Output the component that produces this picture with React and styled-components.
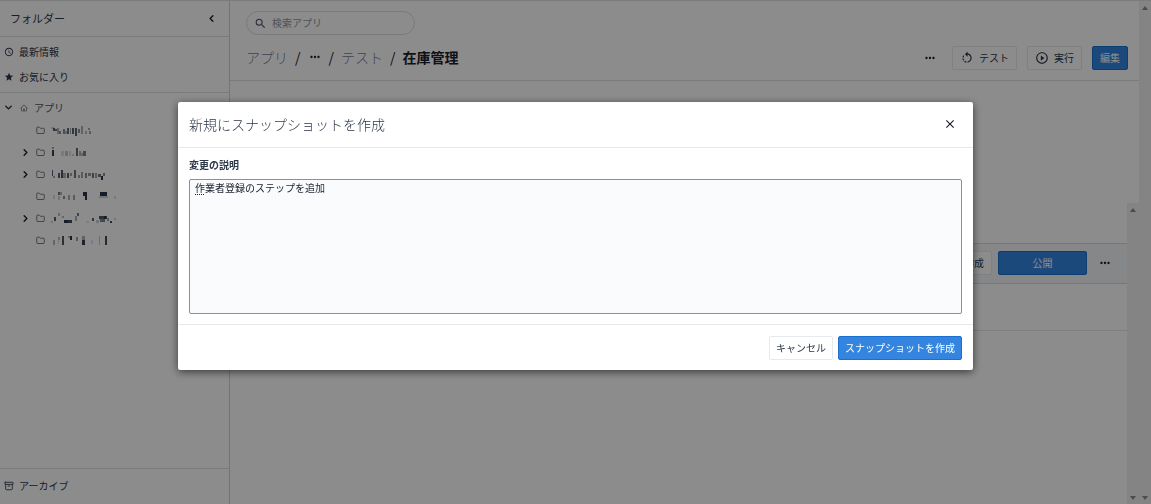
import { useState } from 'react';
import styled, { createGlobalStyle } from 'styled-components';
import {
  Archive,
  ChevronDown,
  ChevronLeft,
  ChevronRight,
  Folder,
} from 'lucide-react';
import { AiOutlineHome } from 'react-icons/ai';
import {
  MdAccessTime,
  MdClose,
  MdMoreHoriz,
  MdPlayCircleOutline,
  MdRotateLeft,
  MdSearch,
  MdStar,
} from 'react-icons/md';

const GlobalStyle = createGlobalStyle`
  * {
    box-sizing: border-box;
  }

  body {
    margin: 0;
    background-color: #ffffff;
    color: #2d3748;
    font-family: 'Noto Sans CJK JP', sans-serif;
    font-size: 10px;
    line-height: 16px;
  }

  button, input, textarea {
    font: inherit;
    color: inherit;
  }

  svg {
    display: block;
    flex-shrink: 0;
  }
`;

const Page = styled.div`
  display: flex;
  height: 100vh;
  overflow: hidden;
  border-top: 1px solid #dfe1e4;
`;

const Sidebar = styled.aside`
  display: flex;
  flex-direction: column;
  flex: 0 0 230px;
  border-right: 1px solid #cfd3d8;
`;

const SidebarHeader = styled.header`
  display: flex;
  align-items: center;
  justify-content: space-between;
  height: 36px;
  padding: 0 12px 1px 10px;
  border-bottom: 1px solid #dfe1e4;
`;

const SidebarTitle = styled.h2`
  margin: 0;
  font-size: 11px;
  font-weight: 400;
`;

const IconButton = styled.button`
  display: flex;
  align-items: center;
  justify-content: center;
  min-width: ${({ $roomy }) => ($roomy ? '24px' : '0')};
  padding: 0;
  border: none;
  background: none;
  color: #1a202c;
  cursor: pointer;
`;

const SideLinks = styled.nav`
  padding: 2px 0 3px;
  border-bottom: 1px solid #dfe1e4;
`;

const SideLink = styled.a`
  display: flex;
  align-items: center;
  gap: 5px;
  height: 25px;
  padding-left: 4px;
  color: #2d3748;
  text-decoration: none;
`;

const Tree = styled.ul`
  flex: 1;
  margin: 0;
  padding: 3px 0 0;
  list-style: none;
`;

const TreeRoot = styled.li`
  display: flex;
  align-items: center;
  gap: 6px;
  height: 23px;
  padding-left: 3px;
  color: #4a5568;
`;

const TreeRow = styled.li`
  display: flex;
  align-items: center;
  gap: 5px;
  height: 22px;
  padding-left: ${({ $open }) => ($open ? '20px' : '36px')};
  color: #4a5568;
`;

const SidebarFooter = styled.footer`
  padding: 4px 0 6px;
  border-top: 1px solid #dfe1e4;
`;

const Main = styled.main`
  display: flex;
  flex: 1;
  flex-direction: column;
  min-width: 0;
`;

const TopBar = styled.header`
  padding: 10px 11px 10px 16px;
  border-bottom: 1px solid #dfe1e4;
`;

const SearchBox = styled.label`
  display: flex;
  align-items: center;
  gap: 5px;
  width: 169px;
  height: 24px;
  padding: 0 7px;
  border: 1px solid #dadee3;
  border-radius: 12px;
  color: #4a5568;
`;

const SearchInput = styled.input`
  flex: 1;
  min-width: 0;
  padding: 0;
  border: none;
  outline: none;
  background: none;

  &::placeholder {
    color: #8d97a5;
  }
`;

const TitleRow = styled.div`
  display: flex;
  align-items: center;
  justify-content: space-between;
  margin-top: 11px;
`;

const Breadcrumbs = styled.nav`
  display: flex;
  align-items: center;
  gap: 7px;
  padding-bottom: 3px;
  color: #1a202c;
  font-size: 14px;
`;

const Crumb = styled.a`
  color: #718096;
  font-weight: 300;
  text-decoration: none;
`;

const CrumbTitle = styled.h1`
  margin: 0;
  font-size: 14px;
  font-weight: 700;
`;

const Actions = styled.div`
  display: flex;
  align-items: center;
  gap: 10px;
`;

const Button = styled.button`
  display: flex;
  align-items: center;
  justify-content: center;
  gap: 5px;
  height: 24px;
  min-width: ${({ $wide }) => ($wide ? '89px' : '36px')};
  padding: 0 7px 1px;
  border: 1px solid ${({ $primary }) => ($primary ? '#1a6fd0' : '#e6e9ed')};
  border-radius: 2px;
  background-color: ${({ $primary }) => ($primary ? '#3385e0' : '#ffffff')};
  color: ${({ $primary }) => ($primary ? '#ffffff' : '#2d3748')};
  white-space: nowrap;
  cursor: pointer;
`;

const Canvas = styled.div`
  height: 122px;
`;

const Panel = styled.section`
  display: flex;
  flex: 1;
  min-height: 0;
`;

const PanelBody = styled.div`
  flex: 1;
  padding-top: 40px;
`;

const PanelToolbar = styled.div`
  display: flex;
  align-items: center;
  justify-content: flex-end;
  gap: 6px;
  height: 41px;
  padding: 0 10px 1px 0;
  border: solid #d5d9de;
  border-width: 1px 0;
  background-color: #f5f6f7;
`;

const PanelRow = styled.div`
  height: 47px;
  border-bottom: 1px solid #e2e5e9;
`;

const Track = styled.div`
  display: flex;
  flex: 0 0 12px;
  flex-direction: column;
  justify-content: space-between;
  align-items: center;
  padding: 5px 0 4px;
  background-color: #f1f1f1;
`;

const Arrow = styled.span`
  border: solid transparent;
  border-width: ${({ $down }) => ($down ? '4px 3px 0' : '0 3px 4px')};
  border-${({ $down }) => ($down ? 'top' : 'bottom')}-color: #8a8a8a;
`;

const Overlay = styled.div`
  position: fixed;
  inset: 0;
  display: flex;
  align-items: flex-start;
  justify-content: center;
  padding: 102px 16px 16px;
  background-color: rgba(0, 0, 0, 0.45);
`;

const Dialog = styled.form`
  width: 100%;
  max-width: 795px;
  border-radius: 2px;
  background-color: #ffffff;
  box-shadow: 0 2px 8px rgba(0, 0, 0, 0.6);
`;

const DialogHeader = styled.header`
  display: flex;
  align-items: center;
  justify-content: space-between;
  height: 46px;
  padding: 0 16px 2px 11px;
  border-bottom: 1px solid #e6e9ed;
`;

const DialogTitle = styled.h2`
  margin: 0;
  color: #2d3748;
  font-size: 14px;
  font-weight: 300;
`;

const DialogBody = styled.div`
  padding: 9px 11px 10px;
`;

const FieldLabel = styled.label`
  display: block;
  margin-bottom: 6px;
  font-weight: 700;
`;

const Field = styled.div`
  position: relative;
`;

const TextArea = styled.textarea`
  display: block;
  width: 100%;
  height: 135px;
  padding: 0 5px;
  border: 1px solid #5b9ade;
  border-radius: 2px;
  outline: none;
  background-color: #f9fbfd;
  color: #1a202c;
  resize: none;
`;

// underline of the character being converted by the input method
const Composition = styled.span`
  position: absolute;
  top: 15px;
  left: 6px;
  width: 9px;
  border-bottom: 1px dotted #1a202c;
`;

const DialogFooter = styled.footer`
  display: flex;
  justify-content: flex-end;
  gap: 5px;
  padding: 11px 11px 10px;
  border-top: 1px solid #e6e9ed;

  ${Button} {
    padding: 0 6px 1px;
  }
`;

// cells of each masked name: x, y, width, height, opacity
const folders = [
  {
    cells: [
      [1, 4, 3, 2, 0.2], [3, 5, 2, 3, 0.7], [5, 6, 2, 2, 0.6], [7, 5, 2, 6, 0.35],
      [9, 8, 2, 3, 0.5], [13, 6, 2, 5, 0.5], [15, 8, 2, 3, 0.3], [17, 5, 2, 6, 0.65],
      [20, 5, 1, 6, 0.4], [22, 5, 2, 6, 0.7], [25, 5, 2, 8, 0.7], [28, 6, 2, 4, 0.5],
      [31, 3, 2, 8, 0.35], [35, 8, 2, 3, 0.3], [38, 5, 2, 2, 0.4], [39, 8, 2, 3, 0.4],
    ],
  },
  {
    open: true,
    cells: [
      [2, 2, 2, 2, 0.4], [2, 5, 2, 6, 0.85], [11, 6, 3, 5, 0.15], [15, 6, 3, 5, 0.25],
      [19, 6, 2, 5, 0.15], [22, 9, 2, 2, 0.2], [26, 3, 2, 8, 0.65], [29, 6, 2, 5, 0.35],
      [31, 8, 2, 3, 0.3], [33, 6, 3, 5, 0.55],
    ],
  },
  {
    open: true,
    cells: [
      [2, 3, 1, 6, 0.7], [3, 9, 2, 2, 0.4], [8, 6, 2, 5, 0.7], [11, 3, 2, 8, 0.75],
      [13, 6, 3, 5, 0.35], [17, 6, 2, 5, 0.7], [20, 6, 2, 3, 0.4], [24, 3, 2, 8, 0.6],
      [28, 8, 2, 3, 0.4], [31, 5, 2, 6, 0.4], [35, 6, 2, 5, 0.5], [38, 6, 3, 3, 0.45],
      [42, 6, 2, 5, 0.6], [45, 6, 2, 5, 0.4], [48, 7, 3, 3, 0.6], [51, 9, 2, 4, 0.9],
      [53, 6, 2, 3, 0.5],
    ],
  },
  {
    cells: [
      [3, 6, 2, 4, 0.15], [8, 3, 2, 3, 0.6], [10, 3, 2, 3, 0.3], [8, 7, 2, 4, 0.2],
      [13, 7, 2, 3, 0.5], [18, 6, 2, 5, 0.35], [23, 6, 2, 5, 0.4], [33, 3, 4, 4, 0.9],
      [35, 7, 2, 4, 0.9], [50, 3, 7, 4, 0.9], [49, 7, 9, 2, 0.2], [64, 7, 2, 3, 0.15],
    ],
  },
  {
    open: true,
    cells: [
      [1, 10, 2, 2, 0.2], [4, 6, 2, 4, 0.7], [8, 2, 2, 3, 0.3], [12, 5, 2, 2, 0.3],
      [14, 9, 4, 3, 0.9], [18, 9, 4, 3, 0.8], [25, 5, 2, 5, 0.35], [27, 2, 2, 3, 0.6],
      [36, 10, 3, 2, 0.12], [42, 7, 2, 3, 0.7], [46, 9, 3, 3, 0.2], [49, 5, 8, 3, 0.75],
      [50, 8, 5, 3, 0.55], [54, 5, 2, 3, 0.6], [57, 7, 2, 3, 0.4], [60, 10, 2, 2, 0.8],
      [64, 7, 2, 2, 0.2],
    ],
  },
  {
    cells: [
      [3, 7, 2, 5, 0.3], [8, 4, 2, 3, 0.3], [8, 7, 1, 4, 0.15], [12, 3, 2, 9, 0.75],
      [18, 3, 2, 2, 0.35], [20, 3, 2, 4, 0.9], [26, 4, 2, 4, 0.4], [32, 3, 3, 4, 0.35],
      [32, 7, 3, 5, 0.85], [41, 7, 2, 4, 0.12], [49, 3, 1, 9, 0.25], [55, 3, 2, 9, 0.8],
    ],
  },
];

const MaskedName = ({ cells }) => (
  <svg width="68" height="14" viewBox="0 0 68 14" fill="#141f33" shapeRendering="crispEdges" aria-hidden="true">
    {cells.map(([x, y, width, height, opacity], index) => (
      <rect key={index} x={x} y={y} width={width} height={height} opacity={opacity} />
    ))}
  </svg>
);

const App = () => {
  const [description, setDescription] = useState('作業者登録のステップを追加');

  return (
    <>
      <GlobalStyle />
      <Page>
        <Sidebar>
          <SidebarHeader>
            <SidebarTitle>フォルダー</SidebarTitle>
            <IconButton type="button" aria-label="閉じる">
              <ChevronLeft size={11} strokeWidth={3} />
            </IconButton>
          </SidebarHeader>
          <SideLinks>
            <SideLink href="#recent">
              <MdAccessTime size={10} />
              最新情報
            </SideLink>
            <SideLink href="#favorites">
              <MdStar size={10} />
              お気に入り
            </SideLink>
          </SideLinks>
          <Tree>
            <TreeRoot>
              <IconButton type="button" aria-label="折りたたむ">
                <ChevronDown size={11} strokeWidth={3} />
              </IconButton>
              <AiOutlineHome size={8} />
              アプリ
            </TreeRoot>
            {folders.map((folder, index) => (
              <TreeRow key={index} $open={folder.open}>
                {folder.open && (
                  <IconButton type="button" aria-label="展開">
                    <ChevronRight size={11} strokeWidth={3} />
                  </IconButton>
                )}
                <Folder size={9} strokeWidth={2} />
                <MaskedName cells={folder.cells} />
              </TreeRow>
            ))}
          </Tree>
          <SidebarFooter>
            <SideLink href="#archive">
              <Archive size={10} strokeWidth={2} />
              アーカイブ
            </SideLink>
          </SidebarFooter>
        </Sidebar>

        <Main>
          <TopBar>
            <SearchBox>
              <MdSearch size={13} />
              <SearchInput type="search" placeholder="検索アプリ" aria-label="検索アプリ" />
            </SearchBox>
            <TitleRow>
              <Breadcrumbs>
                <Crumb href="#apps">アプリ</Crumb>
                <span>/</span>
                <IconButton type="button" aria-label="パスを表示">
                  <MdMoreHoriz size={14} />
                </IconButton>
                <span>/</span>
                <Crumb href="#test">テスト</Crumb>
                <span>/</span>
                <CrumbTitle>在庫管理</CrumbTitle>
              </Breadcrumbs>
              <Actions>
                <IconButton type="button" aria-label="その他" $roomy>
                  <MdMoreHoriz size={14} />
                </IconButton>
                <Button type="button">
                  <MdRotateLeft size={14} />
                  テスト
                </Button>
                <Button type="button">
                  <MdPlayCircleOutline size={14} />
                  実行
                </Button>
                <Button type="button" $primary>編集</Button>
              </Actions>
            </TitleRow>
          </TopBar>
          <Canvas />
          <Panel>
            <PanelBody>
              <PanelToolbar>
                <Button type="button">スナップショットを作成</Button>
                <Button type="button" $primary $wide>公開</Button>
                <IconButton type="button" aria-label="その他" $roomy>
                  <MdMoreHoriz size={14} />
                </IconButton>
              </PanelToolbar>
              <PanelRow />
            </PanelBody>
            <Track>
              <Arrow />
              <Arrow $down />
            </Track>
          </Panel>
        </Main>
        <Track>
          <Arrow />
          <Arrow $down />
        </Track>
      </Page>

      <Overlay>
        <Dialog role="dialog" aria-labelledby="dialog-title" onSubmit={(event) => event.preventDefault()}>
          <DialogHeader>
            <DialogTitle id="dialog-title">新規にスナップショットを作成</DialogTitle>
            <IconButton type="button" aria-label="閉じる">
              <MdClose size={14} />
            </IconButton>
          </DialogHeader>
          <DialogBody>
            <FieldLabel htmlFor="description">変更の説明</FieldLabel>
            <Field>
              <TextArea
                id="description"
                spellCheck={false}
                value={description}
                onChange={(event) => setDescription(event.target.value)}
              />
              <Composition />
            </Field>
          </DialogBody>
          <DialogFooter>
            <Button type="button">キャンセル</Button>
            <Button type="submit" $primary>スナップショットを作成</Button>
          </DialogFooter>
        </Dialog>
      </Overlay>
    </>
  );
};

export default App;
